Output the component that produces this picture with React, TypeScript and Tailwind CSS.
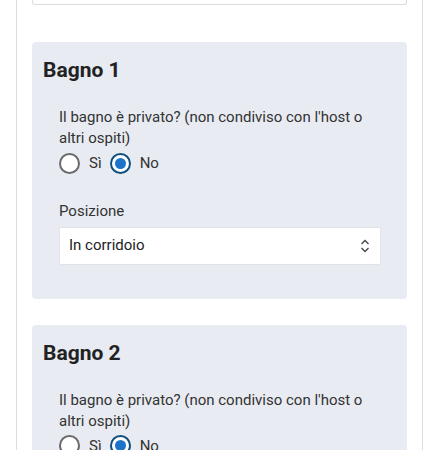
import { useState } from "react";

interface BathroomProps {
  index: number;
}

const Radio = ({ checked, label, onClick }: { checked: boolean; label: string; onClick: () => void }) => {
  return (
    <label className="flex items-center cursor-pointer" onClick={onClick}>
      <span
        className={`flex items-center justify-center w-[21px] h-[21px] rounded-full border-2 bg-white
        ${checked ? "border-[#0f4f7c]" : "border-[#6b6b6b]"}`}
      >
        {checked && <span className="w-[11px] h-[11px] rounded-full bg-[#1b74c9]" />}
      </span>
      <span className="ml-[9px] text-[15px] text-[#333]">{label}</span>
    </label>
  );
};

const BathroomCard = ({ index }: BathroomProps) => {
  const [isPrivate, setIsPrivate] = useState(false);

  return (
    <div className="bg-[#e8ebf2] rounded-[4px] pl-[11px] pr-[26px] pt-[14px] pb-[34px]">
      <h2 className="text-[21px] leading-[28px] font-bold text-[#222]">Bagno {index}</h2>
      <div className="pl-[16px] mt-[23px]">
        <p className="text-[15px] leading-[21px] text-[#333]">
          Il bagno è privato? (non condiviso con l'host o altri ospiti)
        </p>
        <div className="flex gap-[8px] mt-[3px]">
          <Radio checked={isPrivate} label="Sì" onClick={() => setIsPrivate(true)} />
          <Radio checked={!isPrivate} label="No" onClick={() => setIsPrivate(false)} />
        </div>
        {/* Posizione */}
        <p className="mt-[26px] text-[15px] leading-[21px] text-[#333]">Posizione</p>
        <div className="mt-[5px] h-[38px] bg-white border border-[#e1e3e8] rounded-[2px] flex items-center justify-between pl-[9px] pr-[10px]">
          <span className="text-[15px] text-[#222]">In corridoio</span>
          <svg width="10" height="14" viewBox="0 0 10 14" fill="none" stroke="#444" strokeWidth="1.3">
            <path d="M1.5 5 L5 1.5 L8.5 5" />
            <path d="M1.5 9 L5 12.5 L8.5 9" />
          </svg>
        </div>
      </div>
    </div>
  );
};

const App = () => {
  return (
    <div className="w-[438px] h-[450px] overflow-hidden bg-white" style={{ fontFamily: "Roboto, sans-serif" }}>
      <div className="ml-[16px] w-[407px] min-h-[450px] border-x border-[#dedede] px-[15px]">
        {/* tail of the field above */}
        <div className="h-[5px] border-x border-b border-[#dcdcdc] rounded-b-[3px]" />
        <div className="mt-[37px] flex flex-col gap-[26px]">
          <BathroomCard index={1} />
          <BathroomCard index={2} />
        </div>
      </div>
    </div>
  );
};

export default App;
